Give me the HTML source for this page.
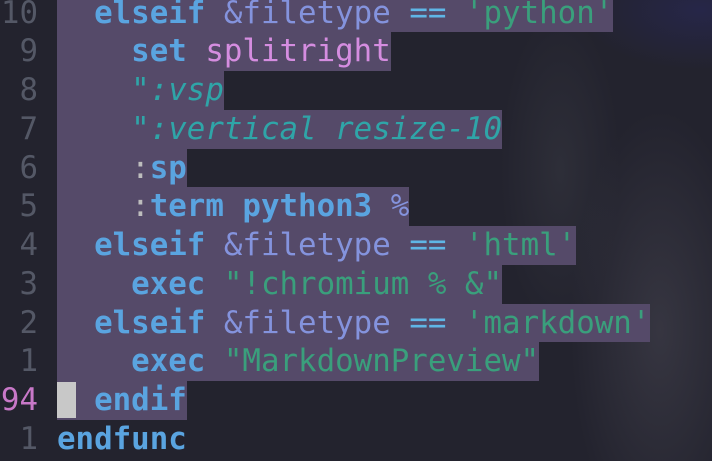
<!DOCTYPE html>
<html><head><meta charset="utf-8"><style>
html,body{margin:0;padding:0;width:712px;height:461px;overflow:hidden;background:#23232e;}
body{position:relative;font-family:"DejaVu Sans Mono","Liberation Mono",monospace;font-size:30.8px;}
.bg{position:absolute;inset:0;background:
radial-gradient(ellipse 90px 220px at 660px 330px, rgba(90,88,100,0.35), transparent),
radial-gradient(ellipse 60px 160px at 560px 170px, rgba(70,72,80,0.3), transparent),
radial-gradient(ellipse 120px 60px at 700px 10px, rgba(40,40,90,0.6), transparent);}
.row{position:absolute;left:0;height:38.75px;line-height:38.75px;white-space:pre;}
.ln{position:absolute;left:0;width:38px;text-align:right;color:#545866;}
.tx{position:absolute;left:57px;}
.s{background:#554a69;}
.k{color:#5aa4e0;font-weight:bold;}
.o{color:#8493dd;}
.q{color:#3a9f7c;}
.c{color:#2fa5a8;font-style:italic;}
.p{color:#d58de0;}
.g{color:#bdbdbd;}
.e{color:#5fb6e6;}
.cur{background:#c8c8c8;color:#c8c8c8;}
</style></head><body><div class="bg"></div>
<div class="row" style="top:-6.5px"><span class="ln">10</span><span class="tx s">  <span class="k">elseif</span> <span class="o">&amp;filetype</span> <span class="e">==</span> <span class="q">'python'</span></span></div>
<div class="row" style="top:32.25px"><span class="ln">9</span><span class="tx s">    <span class="k">set</span> <span class="p">splitright</span></span></div>
<div class="row" style="top:71px"><span class="ln">8</span><span class="tx s">    <span class="c">":vsp</span></span></div>
<div class="row" style="top:109.75px"><span class="ln">7</span><span class="tx s">    <span class="c">":vertical resize-10</span></span></div>
<div class="row" style="top:148.5px"><span class="ln">6</span><span class="tx s">    <span class="g">:</span><span class="k">sp</span></span></div>
<div class="row" style="top:187.25px"><span class="ln">5</span><span class="tx s">    <span class="g">:</span><span class="k">term python3</span> <span class="o">%</span></span></div>
<div class="row" style="top:226px"><span class="ln">4</span><span class="tx s">  <span class="k">elseif</span> <span class="o">&amp;filetype</span> <span class="e">==</span> <span class="q">'html'</span></span></div>
<div class="row" style="top:264.75px"><span class="ln">3</span><span class="tx s">    <span class="k">exec</span> <span class="q">"!chromium % &amp;"</span></span></div>
<div class="row" style="top:303.5px"><span class="ln">2</span><span class="tx s">  <span class="k">elseif</span> <span class="o">&amp;filetype</span> <span class="e">==</span> <span class="q">'markdown'</span></span></div>
<div class="row" style="top:342.25px"><span class="ln">1</span><span class="tx s">    <span class="k">exec</span> <span class="q">"MarkdownPreview"</span></span></div>
<div class="row" style="top:381px"><span class="ln" style="color:#c878c8">94</span><span class="tx s"><span class="cur"> </span> <span class="k">endif</span></span></div>
<div class="row" style="top:419.75px"><span class="ln">1</span><span class="tx"><span class="k">endfunc</span></span></div>
</body></html>
